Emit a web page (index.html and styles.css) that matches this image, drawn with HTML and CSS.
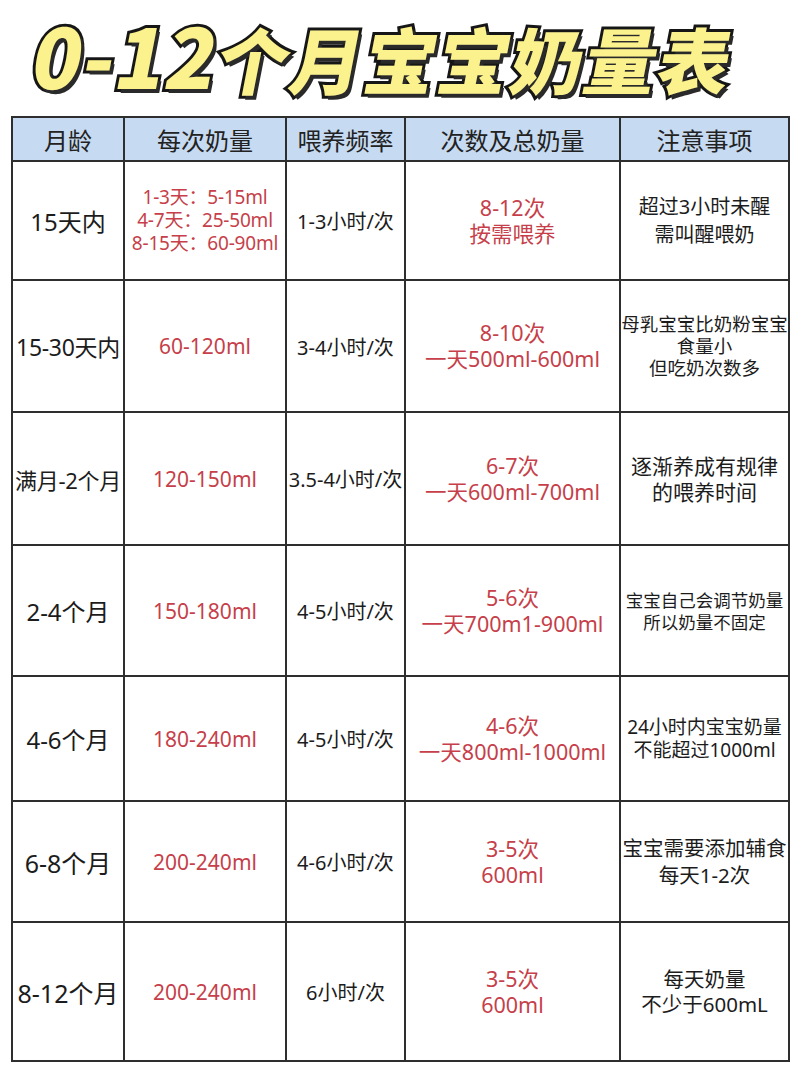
FILE: index.html
```html
<!DOCTYPE html>
<html lang="zh-CN">
<head>
<meta charset="utf-8">
<title>0-12个月宝宝奶量表</title>
<link rel="stylesheet" href="styles.css">
</head>
<body>
<div class="page">
  <header class="title-wrap">
    <h1 class="title"><span class="t-num">0-12</span>个月宝宝奶量表</h1>
  </header>
  <table class="milk">
    <colgroup>
      <col class="c1"><col class="c2"><col class="c3"><col class="c4"><col class="c5">
    </colgroup>
    <thead>
      <tr class="head">
        <th>月龄</th><th>每次奶量</th><th>喂养频率</th><th>次数及总奶量</th><th>注意事项</th>
      </tr>
    </thead>
    <tbody>
      <tr class="r1">
        <td class="age a1">15天内</td>
        <td class="red small">1-3天：5-15ml<br>4-7天：25-50ml<br>8-15天：60-90ml</td>
        <td class="freq">1-3小时/次</td>
        <td class="red total">8-12次<br>按需喂养</td>
        <td class="note n1">超过3小时未醒<br>需叫醒喂奶</td>
      </tr>
      <tr class="r2">
        <td class="age a2">15-30天内</td>
        <td class="red amt p5">60-120ml</td>
        <td class="freq">3-4小时/次</td>
        <td class="red total">8-10次<br>一天500ml-600ml</td>
        <td class="note n2">母乳宝宝比奶粉宝宝<br>食量小<br>但吃奶次数多</td>
      </tr>
      <tr class="r3">
        <td class="age a3">满月-2个月</td>
        <td class="red amt">120-150ml</td>
        <td class="freq">3.5-4小时/次</td>
        <td class="red total t3">6-7次<br>一天600ml-700ml</td>
        <td class="note n3">逐渐养成有规律<br>的喂养时间</td>
      </tr>
      <tr class="r4">
        <td class="age">2-4个月</td>
        <td class="red amt">150-180ml</td>
        <td class="freq">4-5小时/次</td>
        <td class="red total">5-6次<br>一天700m1-900ml</td>
        <td class="note n4">宝宝自己会调节奶量<br>所以奶量不固定</td>
      </tr>
      <tr class="r5">
        <td class="age">4-6个月</td>
        <td class="red amt p20">180-240ml</td>
        <td class="freq">4-5小时/次</td>
        <td class="red total">4-6次<br>一天800ml-1000ml</td>
        <td class="note n5">24小时内宝宝奶量<br>不能超过1000ml</td>
      </tr>
      <tr class="r6">
        <td class="age a6">6-8个月</td>
        <td class="red amt p5">200-240ml</td>
        <td class="freq">4-6小时/次</td>
        <td class="red total">3-5次<br>600ml</td>
        <td class="note n6">宝宝需要添加辅食<br>每天1-2次</td>
      </tr>
      <tr class="r7">
        <td class="age a6">8-12个月</td>
        <td class="red amt">200-240ml</td>
        <td class="freq">6小时/次</td>
        <td class="red total t7">3-5次<br>600ml</td>
        <td class="note n7">每天奶量<br>不少于600mL</td>
      </tr>
    </tbody>
  </table>
</div>
</body>
</html>
```

FILE: styles.css
```css
* { box-sizing: border-box; }
html, body { margin: 0; padding: 0; background: #ffffff; }
body {
  font-family: "Noto Sans", "Noto Sans CJK SC", sans-serif;
  color: #1e1e1e;
}
.page { width: 800px; }

.title-wrap {
  height: 116px;
  padding: 4px 0 0 28px;
}
.title {
  margin: 0;
  font-family: "Noto Sans CJK SC", sans-serif;
  font-weight: 900;
  font-size: 72px;
  line-height: 100px;
  letter-spacing: 1.5px;
  color: #fbf28e;
  -webkit-text-stroke: 6px #161616;
  paint-order: stroke fill;
  text-shadow: 4px 4px 0 #2a2a2a;
  display: inline-block;
  transform: skewX(-11deg);
  white-space: nowrap;
  padding: 0 6px;
}
.t-num { letter-spacing: 1px; font-size: 82px; }

.milk {
  margin-left: 11px;
  width: 777px;
  border-collapse: collapse;
  table-layout: fixed;
  border: 2px solid #2b2b2b;
}
.c1 { width: 112px; }
.c2 { width: 162px; }
.c3 { width: 119px; }
.c4 { width: 215px; }
.c5 { width: 169px; }

.milk th, .milk td {
  border: 2px solid #2e2e2e;
  text-align: center;
  vertical-align: middle;
  padding: 0;
  overflow: visible;
  white-space: nowrap;
}
.head { height: 44px; background: #c6daf1; }
.head th { font-weight: 400; font-size: 24px; color: #222; }

.r1 { height: 119px; }
.r2 { height: 132px; }
.r3 { height: 133px; }
.r4 { height: 131px; }
.r5 { height: 125px; }
.r6 { height: 121px; }
.r7 { height: 139px; }

.age { font-size: 24px; color: #1c1c1c; }
.a1 { padding-right: 18px; }
.a2 { font-size: 23px; letter-spacing: -0.3px; }
.a3 { font-size: 22px; letter-spacing: -0.3px; }
.a6 { font-size: 25px; }

.freq { font-size: 20px; color: #1c1c1c; }

.red { color: #c63f4a; }
.small { font-size: 19px; line-height: 23px; padding-top: 2px; letter-spacing: -0.2px; }
.amt { font-size: 21px; }
.p5 { padding-left: 8px; }
.p20 { padding-left: 20px; }
.total { font-size: 21.5px; line-height: 26px; }
.t3 { padding-top: 10px; }
.t7 { padding-top: 12px; }

.note { color: #1c1c1c; }
.n1 { font-size: 20px; line-height: 28px; }
.n2 { font-size: 18.5px; line-height: 22px; }
.n3 { font-size: 21px; line-height: 26px; padding-top: 28px; padding-left: 8px; }
.n4 { font-size: 17.5px; line-height: 22px; }
.n5 { font-size: 19px; line-height: 23px; padding-left: 4px; }
.n6 { font-size: 20.5px; line-height: 27px; padding-left: 4px; }
.n7 { font-size: 20.5px; line-height: 25px; padding-left: 20px; }
```
